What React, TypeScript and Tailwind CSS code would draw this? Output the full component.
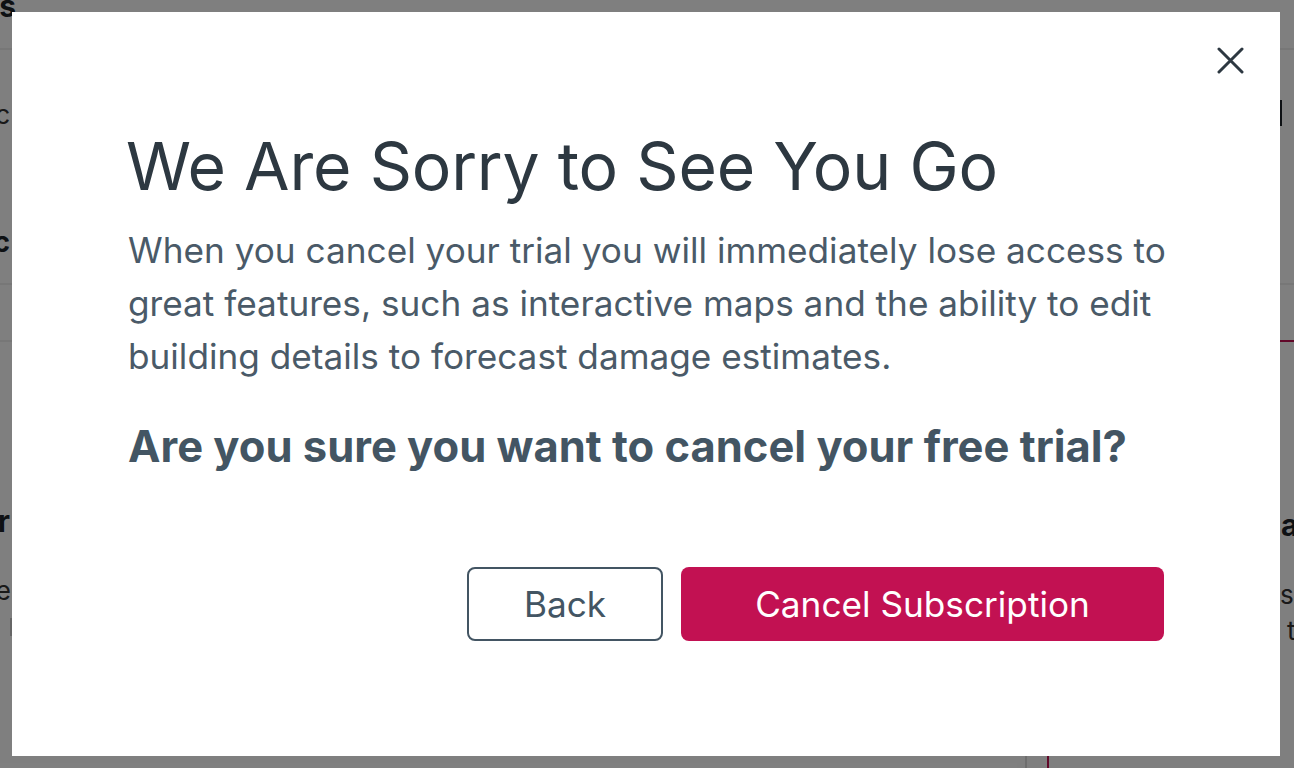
import React from "react";

function ClipRight({ w, children, className }: { w: string; children: React.ReactNode; className?: string }) {
  return (
    <div className={`flex justify-end whitespace-nowrap ${w} ${className ?? ""}`}>
      <span>{children}</span>
    </div>
  );
}

export default function App() {
  return (
    <div
      className="relative w-[1294px] h-[768px] overflow-hidden bg-white text-[#1c2329]"
      style={{ fontFamily: "Inter, 'Noto Sans', sans-serif" }}
    >
      {/* background page */}
      <div className="flex flex-col">
        <div className="h-[50px] border-b-2 border-[#efefef]">
          <ClipRight w="w-[16px]" className="text-[30px] font-bold leading-none -mt-[9px]">
            Settings
          </ClipRight>
        </div>
        <div className="flex justify-between h-[100px] pt-[50px]">
          <ClipRight w="w-[10px]" className="text-[26px] leading-[30px] text-[#333]">
            Public
          </ClipRight>
          <div className="w-[14px] h-[26px] flex">
            <div className="w-[2px] h-[26px] bg-[#1c2329]" />
          </div>
        </div>
        <div className="h-[133px] pt-[76px]">
          <ClipRight w="w-[10px]" className="text-[28px] font-bold leading-[32px]">
            Basic
          </ClipRight>
        </div>
        <div className="h-[57px] border-t-2 border-[#efefef]" />
        <div className="flex h-[430px]">
          <div className="w-[1025px] shrink-0 border-t-2 border-[#efefef] pt-[162px]">
            <ClipRight w="w-[10px]" className="text-[30px] font-bold leading-[34px]">
              Current Tier
            </ClipRight>
            <ClipRight w="w-[11px]" className="text-[26px] leading-[30px] text-[#333] mt-[38px]">
              Free trial active
            </ClipRight>
            <div className="ml-[10px] mt-[12px] w-[2px] h-[18px] bg-[#ccc]" />
          </div>
          <div className="w-[22px] shrink-0 border-l-2 border-[#dcdcdc]" />
          <div className="flex-1 min-w-0 border-t-2 border-l-2 border-[#c21152] pl-[232px] pt-[166px] whitespace-nowrap">
            <div className="text-[30px] font-bold leading-[34px]">about</div>
            <div className="text-[26px] leading-[30px] text-[#333] mt-[38px] -ml-[1px]">show</div>
            <div className="text-[26px] leading-[30px] text-[#333] ml-[6px] mt-[6px]">to</div>
          </div>
        </div>
      </div>

      {/* overlay */}
      <div className="absolute inset-0 bg-black/50" />

      {/* modal */}
      <div className="absolute left-[12px] top-[12px] w-[1268px] h-[744px] bg-white">
        <button className="absolute right-[34px] top-[32px] w-[32px] h-[32px] flex items-center justify-center text-[#2d3841]">
          <svg width="27" height="27" viewBox="0 0 27 27" fill="none">
            <path d="M2 2L25 25M25 2L2 25" stroke="currentColor" strokeWidth="3" strokeLinecap="round" />
          </svg>
        </button>
        <div className="flex flex-col px-[116px] pt-[115px]">
          <h1 className="text-[66px] leading-[79px] font-normal text-[#2d3841] -ml-[2px] tracking-[-0.2px]">
            We Are Sorry to See You Go
          </h1>
          <p className="mt-[18px] w-[1050px] text-[35.2px] leading-[52.8px] text-[#4a5a68]">
            When you cancel your trial you will immediately lose access to great features, such as interactive maps and the ability to edit building details to forecast damage estimates.
          </p>
          <h2 className="mt-[38px] text-[43.5px] leading-[52px] font-bold text-[#435563]">
            Are you sure you want to cancel your free trial?
          </h2>
          <div className="mt-[95px] flex justify-end gap-[18px]">
            <button className="w-[196px] h-[74px] rounded-[8px] border-2 border-[#435563] text-[35.2px] text-[#435563] bg-white">
              Back
            </button>
            <button className="w-[483px] h-[74px] rounded-[8px] bg-[#c21152] text-[35.2px] text-white">
              Cancel Subscription
            </button>
          </div>
        </div>
      </div>
    </div>
  );
}
